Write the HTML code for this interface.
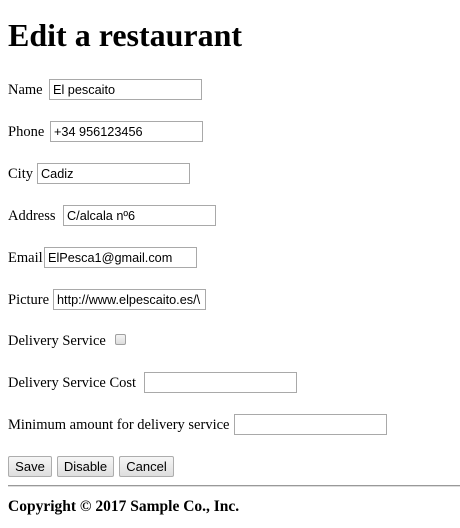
<!DOCTYPE html>
<html><head><style>
body{margin:0;width:460px;height:528px;background:#fff;font-family:"Liberation Serif",serif;color:#000;position:relative;overflow:hidden}
h1{position:absolute;left:8px;top:17px;margin:0;font-size:32px;line-height:37px;font-weight:bold}
.lbl{position:absolute;left:8px;font-size:14.5px;line-height:22px;white-space:nowrap}
.in{position:absolute;box-sizing:border-box;width:153px;height:21px;border:1px solid #a9a9a9;font-family:"Liberation Sans",sans-serif;font-size:12.7px;padding:0 3px;line-height:20px;overflow:hidden;white-space:nowrap}
.cb{position:absolute;left:115px;top:334px;width:11px;height:11px;box-sizing:border-box;border:1px solid #a0a0a0;border-radius:2px;background:linear-gradient(#f4f4f4,#ddd)}
.btn{position:absolute;top:456px;height:21px;box-sizing:border-box;border:1px solid #adadad;background:linear-gradient(#f6f6f6,#dedede);font-family:"Liberation Sans",sans-serif;font-size:13px;line-height:19px;text-align:center;border-radius:2px}
hr{position:absolute;left:8px;top:485px;width:452px;margin:0;border:0;border-top:1px solid #999;border-bottom:1px solid #ddd}
.foot{position:absolute;left:8px;top:498px;font-size:15.5px;font-weight:bold;line-height:18px;white-space:nowrap}
</style></head><body>
<h1>Edit a restaurant</h1>
<div class="lbl" style="top:79px">Name</div><div class="in" style="left:49px;top:79px">El pescaito</div>
<div class="lbl" style="top:121px">Phone</div><div class="in" style="left:50px;top:121px">+34 956123456</div>
<div class="lbl" style="top:163px">City</div><div class="in" style="left:37px;top:163px">Cadiz</div>
<div class="lbl" style="top:205px">Address</div><div class="in" style="left:63px;top:205px">C/alcala nº6</div>
<div class="lbl" style="top:247px">Email</div><div class="in" style="left:44px;top:247px">ElPesca1@gmail.com</div>
<div class="lbl" style="top:289px">Picture</div><div class="in" style="left:53px;top:289px">http://www.elpescaito.es/\</div>
<div class="lbl" style="top:330px">Delivery Service</div><div class="cb"></div>
<div class="lbl" style="top:372px">Delivery Service Cost</div><div class="in" style="left:144px;top:372px"></div>
<div class="lbl" style="top:414px">Minimum amount for delivery service</div><div class="in" style="left:234px;top:414px"></div>
<div class="btn" style="left:8px;width:44px">Save</div>
<div class="btn" style="left:57px;width:57px">Disable</div>
<div class="btn" style="left:119px;width:55px">Cancel</div>
<hr>
<div class="foot">Copyright © 2017 Sample Co., Inc.</div>
</body></html>
